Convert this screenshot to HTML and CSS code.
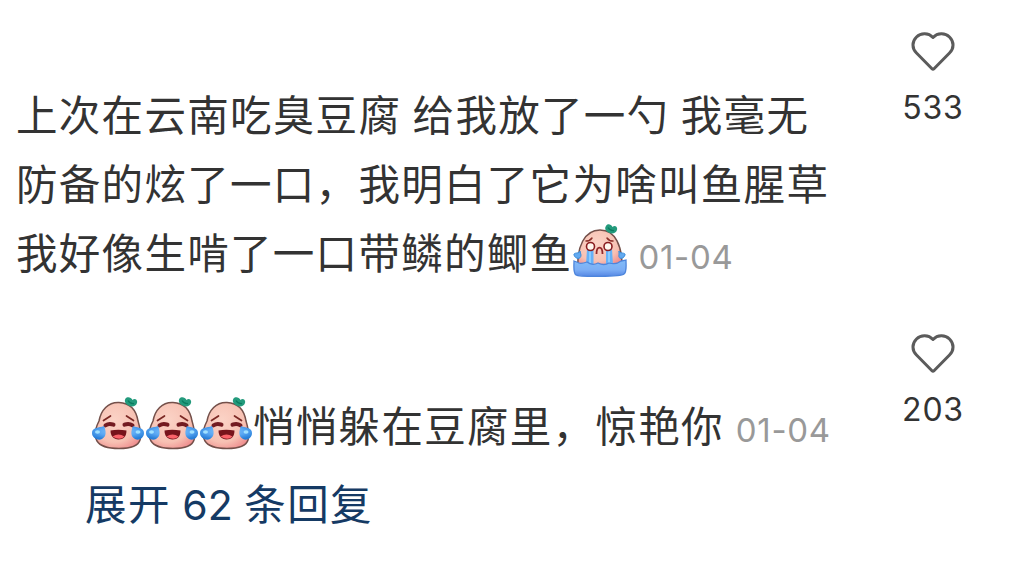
FILE: index.html
```html
<!DOCTYPE html>
<html lang="zh-CN">
<head>
<meta charset="utf-8">
<title>评论</title>
<link rel="stylesheet" href="styles.css">
</head>
<body>
<svg class="defs" aria-hidden="true">
  <defs>
    <radialGradient id="skin" cx="42%" cy="38%" r="74%">
      <stop offset="0" stop-color="#fbd3c6"/><stop offset=".65" stop-color="#f7c1b3"/><stop offset="1" stop-color="#ee8588"/>
    </radialGradient>
    <radialGradient id="drop" cx="50%" cy="40%" r="62%">
      <stop offset="0" stop-color="#8ccbfc"/><stop offset=".6" stop-color="#58a6f3"/><stop offset="1" stop-color="#287fd8"/>
    </radialGradient>
    <linearGradient id="pool" x1="0" y1="0" x2="0" y2="1">
      <stop offset="0" stop-color="#83bdf8"/><stop offset=".6" stop-color="#7caef5"/><stop offset="1" stop-color="#5587e4"/>
    </linearGradient>
    <symbol id="laugh" viewBox="0 0 54 54">
      <path d="M27 5.500C16 5 9 13 7 24C4 30 1 38 5 44C9 50.500 18 51.500 27 51.500C37 51.500 46 50 48 43C50 37 48 31 46 24C44 12 37 6 27 5.500Z" fill="url(#skin)" stroke="#74504a" stroke-width="1.500"/>
      <path d="M33.500 1.500C35 -.5 39 -.3 40.500 3C42.500 .8 46 2.500 45 6C44 9.500 40 10.500 36.500 8.500C33 7 32 4 33.500 1.500Z" fill="#239a7c"/>
      <path d="M36 3.500Q38 7 42 6.500" fill="none" stroke="#0b7c60" stroke-width="1.300"/>
      <path d="M11.500 23.500L18.500 19M34.500 19L41.500 23.500" fill="none" stroke="#7b2824" stroke-width="1.700" stroke-linecap="round"/>
      <path d="M13.500 28.300Q17 26 21.500 27.700M32.500 27.700Q37 26 40.500 28.300" fill="none" stroke="#731b21" stroke-width="4" stroke-linecap="round"/>
      <path d="M18.500 33.500Q26 32 34.500 33.500C34.500 39.500 31.500 42.500 26.500 42.500C21.500 42.500 18.500 39 18.500 33.500Z" fill="#77131b"/>
      <path d="M20.500 39.500Q26.500 35.500 32.500 39.500Q28 44 20.500 39.500Z" fill="#fa6269"/>
      <path d="M12 29C14 34 15 39 10 42C6 44 0 41 0 36C0 30 7 31 12 29ZM41 29C39 34 38 39 43 42C47 44 52 41 52 36C52 30 45 31 41 29Z" fill="url(#drop)"/>
      <ellipse cx="5.500" cy="35" rx="2.500" ry="1.700" fill="#9fe0ff"/><ellipse cx="46" cy="35" rx="2.500" ry="1.700" fill="#9fe0ff"/>
    </symbol>
    <symbol id="cry" viewBox="0 0 54 54">
      <path d="M5 42C4 24 11 6 27 6C43 6 49 23 49 42Z" fill="url(#skin)" stroke="#74504a" stroke-width="1.500"/>
      <path d="M33 2C34 -.5 38 -.3 39.500 3C41.500 .8 45 2.500 44 6C43 9.500 39 10.500 35.500 8.500C32 7 31.500 4 33 2Z" fill="#239a7c"/>
      <path d="M35 3.500Q37 7 41 6.500" fill="none" stroke="#0b7c60" stroke-width="1.300"/>
      <path d="M13 17Q17 17 19 14M34 14Q36 17 40 17" fill="none" stroke="#8c302a" stroke-width="1.500" stroke-linecap="round"/>
      <path d="M14 25H20.500V41H13ZM33 25H39L40 41H33Z" fill="#65b1f8"/>
      <path d="M17 26V41M36 26V41" stroke="#8acbff" stroke-width="2"/>
      <circle cx="17.500" cy="22.500" r="4" fill="#fff8ef" stroke="#8a1d20" stroke-width="1.600"/><circle cx="35" cy="22.500" r="4" fill="#fff8ef" stroke="#8a1d20" stroke-width="1.600"/>
      <path d="M23.500 30C23.500 21.500 29.500 21.500 29.500 30" fill="none" stroke="#94292b" stroke-width="1.800"/>
      <path d="M7 27C7 30 0 28 1 31C2 35 8 36 8 31ZM46 27C46 30 53 28 52 31C51 35 45 36 46 31Z" fill="#63aaf0" stroke="#398cdb"/>
      <path d="M1 37Q4 38 6 39T14 38Q19 42 25 39Q31 42 36 39Q43 41 48 37L53 36C53 42 54 48 51 50C48 53 6 53 3 51C0 49 1 42 1 37Z" fill="url(#pool)" stroke="#4d85dc" stroke-width="1.300"/>
    </symbol>
    <symbol id="heart" viewBox="0 0 44 40">
      <path d="M22 5.500C17.500 .8 10 .6 5.500 5C.8 9.600 .8 16.400 5.500 21L21 36.700Q22 37.700 23 36.700L38.500 21C43.200 16.400 43.200 9.600 38.500 5C34 .6 26.500 .8 22 5.500Z" fill="none" stroke="#5b5b5b" stroke-width="3" stroke-linejoin="round"/>
    </symbol>
  </defs>
</svg>
<main class="comments">
  <article class="comment">
    <div class="body">
      <p class="line">上次在云南吃臭豆腐 给我放了一勺 我毫无</p>
      <p class="line">防备的炫了一口，我明白了它为啥叫鱼腥草</p>
      <p class="line">我好像生啃了一口带鳞的鲫鱼<svg class="emoji"><use href="#cry"/></svg><time class="date">01-04</time></p>
    </div>
    <div class="like"><svg class="heart"><use href="#heart"/></svg><span class="count">533</span></div>
  </article>
  <article class="comment reply">
    <div class="body">
      <p class="line"><svg class="emoji"><use href="#laugh"/></svg><svg class="emoji"><use href="#laugh"/></svg><svg class="emoji"><use href="#laugh"/></svg>悄悄躲在豆腐里，惊艳你<time class="date">01-04</time></p>
      <a class="expand">展开 <span class="number">62</span> 条回复</a>
    </div>
    <div class="like"><svg class="heart"><use href="#heart"/></svg><span class="count">203</span></div>
  </article>
</main>
</body>
</html>
```
FILE: styles.css
```css
body {
  margin: 0;
  background: #fff;
  color: #333;
  font-family: "Noto Sans CJK SC", sans-serif;
}

.defs {
  display: block;
  width: 0;
  height: 0;
}

.comments {
  height: 574px;
  overflow: hidden;
}

.comment {
  display: flex;
  justify-content: space-between;
  box-sizing: border-box;
  height: 302px;
  padding: 32px 38px 0 16px;
}

.body {
  padding-top: 47px;
}

.line {
  display: flex;
  align-items: center;
  height: 69px;
  margin: 0;
  font-size: 41.5px;
  line-height: 69px;
  letter-spacing: 1.3px;
  word-spacing: 0.8px;
  white-space: pre;
}

.emoji {
  flex: none;
  width: 54px;
  height: 54px;
  margin: 0 -1px 2px 1px;
}

.date {
  padding: 11px 0 0 12px;
  color: #999;
  font-family: Inter, sans-serif;
  font-size: 33px;
  letter-spacing: 0.7px;
}

.like {
  display: flex;
  flex-direction: column;
  align-items: center;
  width: 80px;
}

.heart {
  width: 44px;
  height: 40px;
}

.count {
  margin-top: 16px;
  font-family: Inter, sans-serif;
  font-size: 32px;
  line-height: 40px;
  letter-spacing: 0.8px;
}

.reply {
  padding-left: 85px;
}

.reply .body {
  padding-top: 56px;
}

.reply .line {
  padding-left: 6px;
}

.expand {
  display: block;
  margin-top: 9px;
  color: #153a64;
  font-size: 41.5px;
  line-height: 69px;
  letter-spacing: 1.4px;
  word-spacing: 0.8px;
}

.number {
  font-family: Inter, sans-serif;
  font-size: 41px;
  letter-spacing: 0;
}
```
